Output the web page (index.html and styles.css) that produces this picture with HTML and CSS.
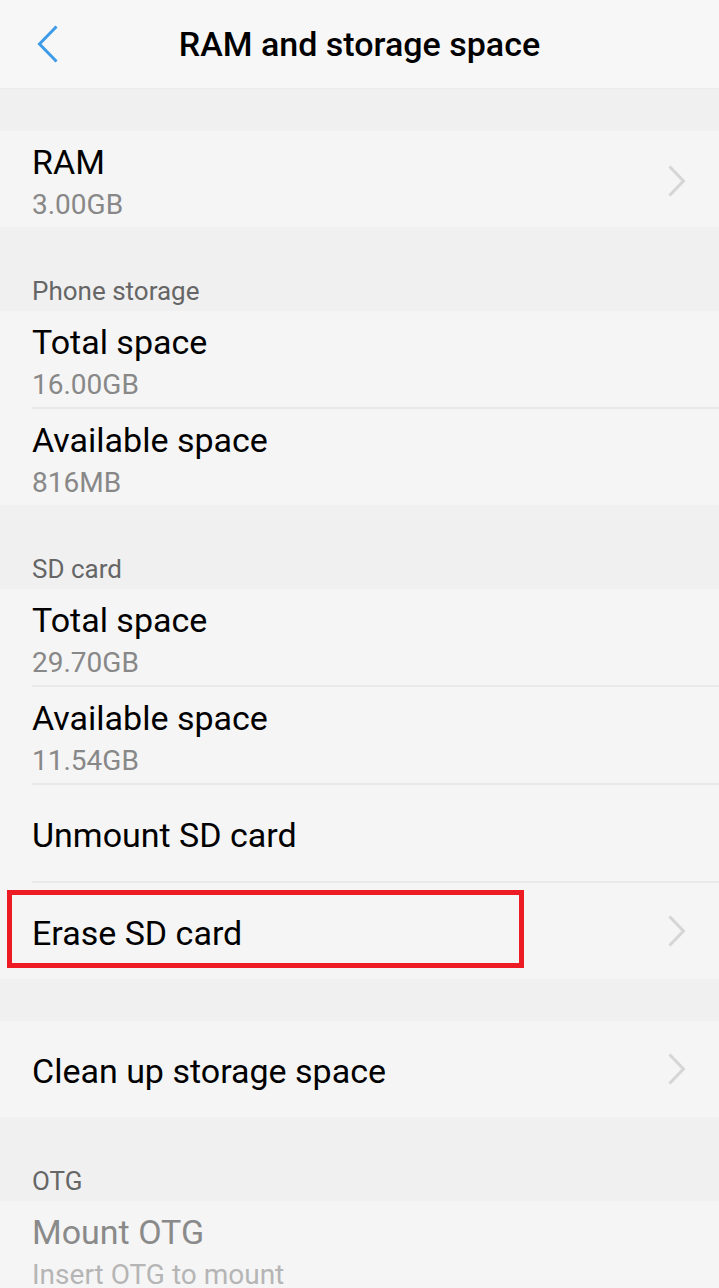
FILE: index.html
```html
<!DOCTYPE html>
<html>
<head>
<meta charset="utf-8">
<link rel="stylesheet" href="styles.css">
</head>
<body>
<div class="screen">
  <header class="topbar">
    <svg class="back" width="22" height="38" viewBox="0 0 22 38"><polyline points="19.5,1.5 2.5,19 19.5,36.5" fill="none" stroke="#3d9be9" stroke-width="3"/></svg>
    <div class="title">RAM and storage space</div>
  </header>
  <div class="gap"></div>
  <div class="group">
    <div class="item two">
      <div class="texts"><div class="main">RAM</div><div class="sub">3.00GB</div></div>
      <svg class="chev" width="18" height="32" viewBox="0 0 18 32"><polyline points="1.5,1.5 15.5,16 1.5,30.5" fill="none" stroke="#d5d5d5" stroke-width="3"/></svg>
    </div>
  </div>
  <div class="section">Phone storage</div>
  <div class="group">
    <div class="item two"><div class="texts"><div class="main">Total space</div><div class="sub">16.00GB</div></div></div>
    <div class="divider"></div>
    <div class="item two"><div class="texts"><div class="main">Available space</div><div class="sub">816MB</div></div></div>
  </div>
  <div class="section">SD card</div>
  <div class="group">
    <div class="item two"><div class="texts"><div class="main">Total space</div><div class="sub">29.70GB</div></div></div>
    <div class="divider"></div>
    <div class="item two"><div class="texts"><div class="main">Available space</div><div class="sub">11.54GB</div></div></div>
    <div class="divider"></div>
    <div class="item one"><div class="main">Unmount SD card</div></div>
    <div class="divider"></div>
    <div class="item one highlight">
      <div class="main">Erase SD card</div>
      <svg class="chev" width="18" height="32" viewBox="0 0 18 32"><polyline points="1.5,1.5 15.5,16 1.5,30.5" fill="none" stroke="#d5d5d5" stroke-width="3"/></svg>
      <div class="redbox"></div>
    </div>
  </div>
  <div class="gap"></div>
  <div class="group">
    <div class="item one">
      <div class="main">Clean up storage space</div>
      <svg class="chev" width="18" height="32" viewBox="0 0 18 32"><polyline points="1.5,1.5 15.5,16 1.5,30.5" fill="none" stroke="#d5d5d5" stroke-width="3"/></svg>
    </div>
  </div>
  <div class="section">OTG</div>
  <div class="group">
    <div class="item two disabled"><div class="texts"><div class="main">Mount OTG</div><div class="sub">Insert OTG to mount</div></div></div>
  </div>
</div>
</body>
</html>
```

FILE: styles.css
```css
* { box-sizing: border-box; }
html, body { margin: 0; padding: 0; }
body {
  width: 719px;
  height: 1288px;
  overflow: hidden;
  background: #f0f0f0;
  font-family: Roboto, "Liberation Sans", sans-serif;
}
.screen { display: flex; flex-direction: column; }
.topbar {
  position: relative;
  height: 89px;
  background: #f7f7f7;
  border-bottom: 1px solid #ebebeb;
  display: flex;
  align-items: center;
  justify-content: center;
}
.back { position: absolute; left: 37px; top: 25px; }
.title {
  font-size: 34px;
  font-weight: 500;
  color: #000;
  line-height: 88px;
}
.gap { height: 42px; background: #f0f0f0; }
.group { background: #f5f5f5; display: flex; flex-direction: column; }
.item {
  position: relative;
  height: 96px;
  padding-left: 32px;
  padding-right: 32px;
  display: flex;
  align-items: center;
  justify-content: space-between;
}
.item.one { padding-top: 3px; }
.item.two { align-items: flex-start; padding-top: 11px; }
.item.two .chev { margin-top: 23px; }
.texts { display: flex; flex-direction: column; }
.main { font-size: 34px; line-height: 40px; color: #000; }
.sub { font-size: 28px; line-height: 34px; margin-top: 6px; color: #888; }
.divider { height: 2px; background: #e8e8e8; margin-left: 32px; }
.section {
  height: 84px;
  display: flex;
  align-items: flex-end;
  padding: 0 32px 5px;
  font-size: 26px;
  line-height: 30px;
  color: #666;
}
.chev { flex: none; margin-right: 1px; }
.item.one .chev { margin-top: -3px; }
.disabled .main { color: #8a8a8a; }
.disabled .sub { color: #b5b5b5; }
.redbox {
  position: absolute;
  left: 7px;
  top: 7px;
  width: 517px;
  height: 78px;
  border: 5px solid #ed1c24;
}
```
